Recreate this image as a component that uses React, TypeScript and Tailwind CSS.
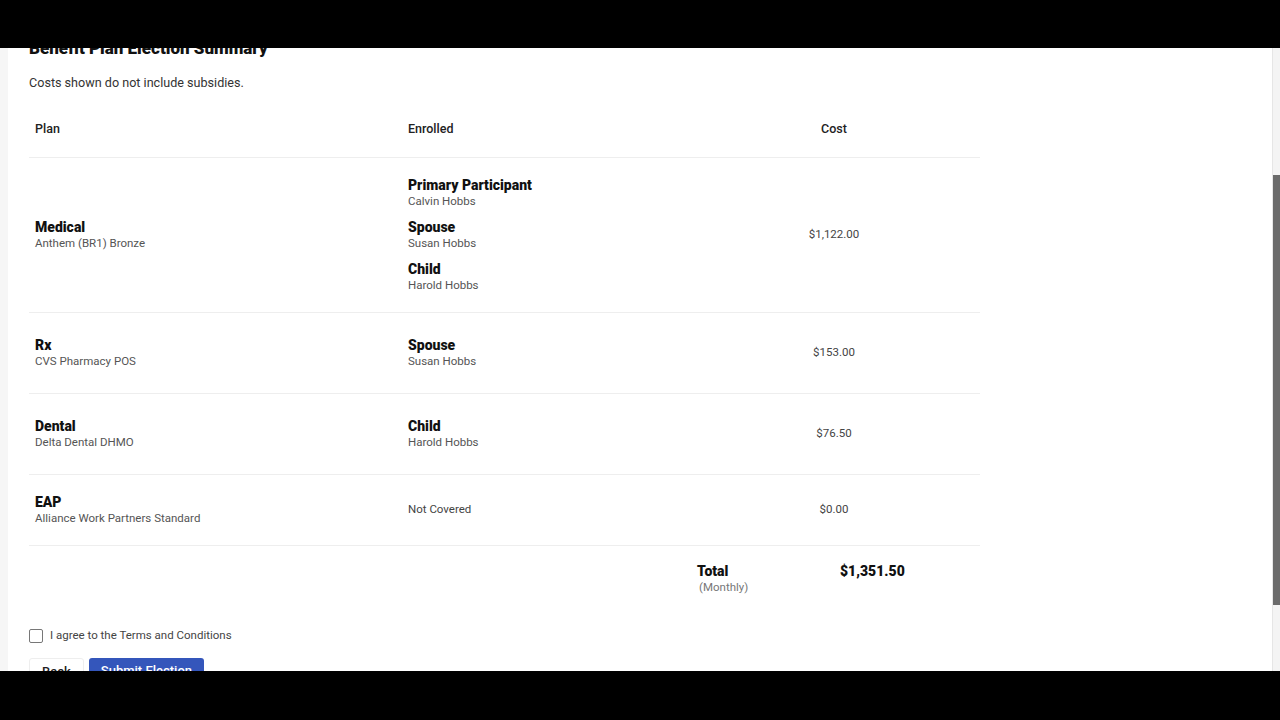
const ROWS = [
  {
    plan: "Medical",
    detail: "Anthem (BR1) Bronze",
    members: [
      { role: "Primary Participant", name: "Calvin Hobbs" },
      { role: "Spouse", name: "Susan Hobbs" },
      { role: "Child", name: "Harold Hobbs" },
    ],
    cost: "$1,122.00",
    h: "h-[155px]",
  },
  {
    plan: "Rx",
    detail: "CVS Pharmacy POS",
    members: [{ role: "Spouse", name: "Susan Hobbs" }],
    cost: "$153.00",
    h: "h-[81px]",
  },
  {
    plan: "Dental",
    detail: "Delta Dental DHMO",
    members: [{ role: "Child", name: "Harold Hobbs" }],
    cost: "$76.50",
    h: "h-[81px]",
  },
  {
    plan: "EAP",
    detail: "Alliance Work Partners Standard",
    members: [],
    cost: "$0.00",
    h: "h-[71px]",
  },
];

export default function App() {
  return (
    <div className="w-[1280px] h-[720px] bg-black flex flex-col overflow-hidden font-['Roboto',sans-serif]">
      <div className="h-[48px] shrink-0 bg-black" />

      <div className="relative flex-1 flex bg-white overflow-hidden">
        <div className="w-[8px] shrink-0 bg-[#f6f6f6]" />
        <div className="flex-1 pl-[21px] pr-[300px]">
          <h1 className="-mt-[12px] text-[17px] leading-[24px] font-black text-[#111]">
            Benefit Plan Election Summary
          </h1>
          <p className="mt-[14px] text-[12.6px] leading-[18px] text-[#333]">
            Costs shown do not include subsidies.
          </p>

          {/* Table header */}
          <div className="mt-[10px] grid grid-cols-[379px_280px_292px] h-[56px] items-center border-b border-[#eeeeee] text-[12.5px] font-medium text-[#222]">
            <div className="pl-[6px]">Plan</div>
            <div>Enrolled</div>
            <div className="text-center">Cost</div>
          </div>

          {ROWS.map((r) => (
            <div
              key={r.plan}
              className={`grid grid-cols-[379px_280px_292px] ${r.h} items-center border-b border-[#eeeeee]`}
            >
              <div className="pl-[6px]">
                <div className="text-[14px] leading-[17px] font-black text-[#111]">{r.plan}</div>
                <div className="text-[11.5px] leading-[15px] text-[#555]">{r.detail}</div>
              </div>
              <div className="flex flex-col gap-[10px]">
                {r.members.length === 0 ? (
                  <div className="text-[11.5px] text-[#444]">Not Covered</div>
                ) : (
                  r.members.map((m) => (
                    <div key={m.role}>
                      <div className="text-[14px] leading-[17px] font-black text-[#111]">{m.role}</div>
                      <div className="text-[11.5px] leading-[15px] text-[#555]">{m.name}</div>
                    </div>
                  ))
                )}
              </div>
              <div className="text-center text-[11.5px] text-[#444]">{r.cost}</div>
            </div>
          ))}

          {/* Total */}
          <div className="grid grid-cols-[668px_143px_140px] pt-[17px]">
            <div />
            <div>
              <div className="text-[14px] leading-[17px] font-black text-[#111]">Total</div>
              <div className="text-[11.5px] leading-[15px] text-[#777] pl-[2px]">(Monthly)</div>
            </div>
            <div className="text-[14px] leading-[17px] font-black text-[#111]">$1,351.50</div>
          </div>

          <label className="mt-[32px] flex items-center gap-[7px]">
            <span className="w-[14px] h-[14px] border-[1.5px] border-[#777] rounded-[2px] bg-white" />
            <span className="text-[11.5px] text-[#444]">I agree to the Terms and Conditions</span>
          </label>

          <div className="mt-[14px] flex gap-[5px]">
            <button className="h-[34px] px-[12px] pt-[5px] flex items-start rounded-[3px] bg-white border border-[#eeeeee] text-[13px] leading-[16px] font-medium text-[#222]">
              Back
            </button>
            <button className="h-[34px] px-[12px] pt-[5px] flex items-start rounded-[3px] bg-[#3456bb] text-[13px] leading-[16px] font-medium text-white">
              Submit Election
            </button>
          </div>
        </div>

        {/* Scrollbar */}
        <div className="absolute right-0 top-0 bottom-0 w-[8px] bg-[#f4f4f4] border-l border-[#e6e6e6]">
          <div className="mt-[127px] h-[430px] bg-[#6b6b6b]" />
        </div>
      </div>

      <div className="h-[49px] shrink-0 bg-black" />
    </div>
  );
}
